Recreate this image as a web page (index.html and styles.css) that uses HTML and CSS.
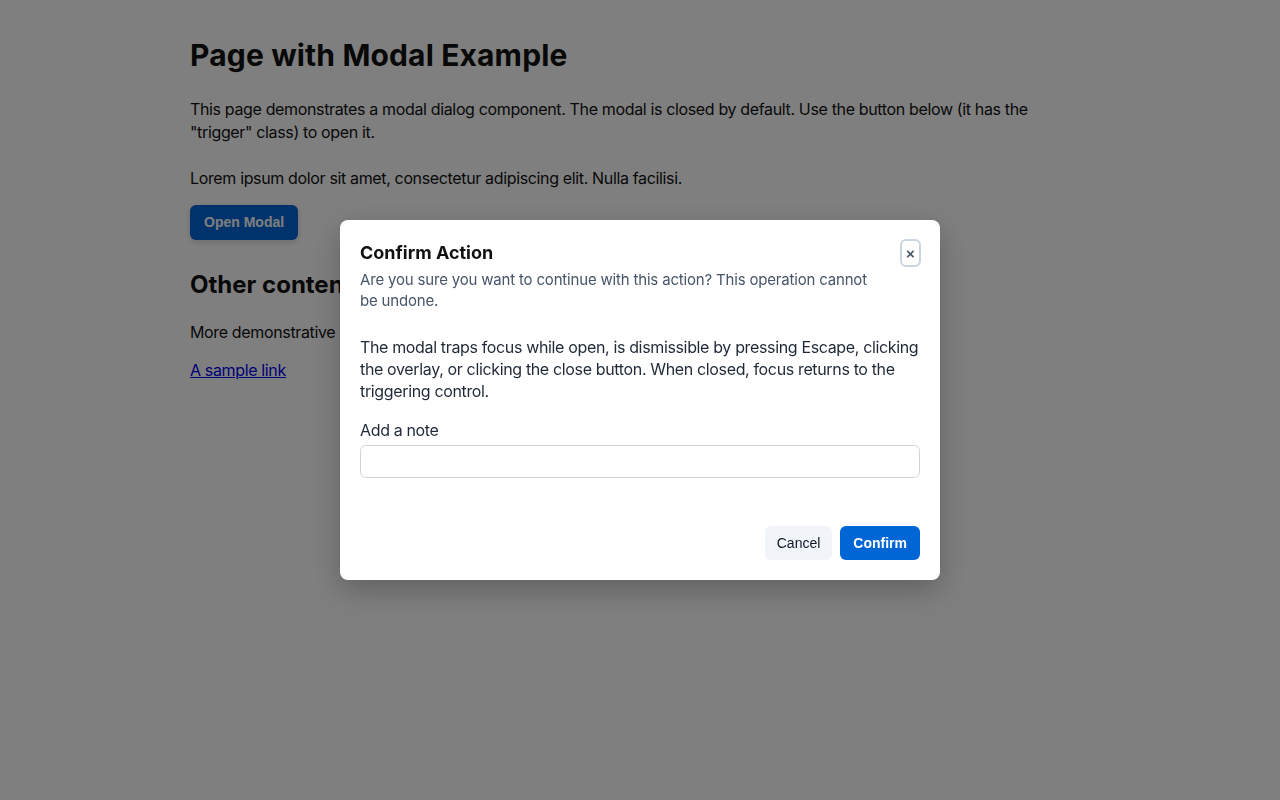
FILE: index.html
```html
<!DOCTYPE html>
<html lang="en">
<head>
    <meta charset="UTF-8">
    <meta name="viewport" content="width=device-width, initial-scale=1.0">
    <title>Page with Modal Example</title>
    <link rel="stylesheet" href="styles.css">
</head>
<body>
    <main class="page">
        <h1>Page with Modal Example</h1>
        <p>This page demonstrates a modal dialog component. The modal is closed by default. Use the button below (it has the "trigger" class) to open it.</p>
        <p>Lorem ipsum dolor sit amet, consectetur adipiscing elit. Nulla facilisi.</p>
        <button class="trigger" id="open-btn">Open Modal</button>

        <h2>Other content</h2>
        <p>More demonstrative content sits behind the dialog while it is open.</p>
        <p class="link-row"><a href="#">A sample link</a></p>
    </main>

    <div class="overlay" id="overlay">
        <div class="modal" role="dialog" aria-modal="true" aria-labelledby="modal-title" aria-describedby="modal-desc">
            <div class="modal-header">
                <div class="modal-heading">
                    <h3 id="modal-title">Confirm Action</h3>
                    <p id="modal-desc">Are you sure you want to continue with this action? This operation cannot be undone.</p>
                </div>
                <button class="close-btn" id="close-btn" aria-label="Close">&times;</button>
            </div>
            <div class="modal-body">
                <p>The modal traps focus while open, is dismissible by pressing Escape, clicking the overlay, or clicking the close button. When closed, focus returns to the triggering control.</p>
                <label for="note">Add a note</label>
                <input type="text" id="note">
            </div>
            <div class="modal-footer">
                <button class="btn btn-secondary" id="cancel-btn">Cancel</button>
                <button class="btn btn-primary" id="confirm-btn">Confirm</button>
            </div>
        </div>
    </div>
</body>
</html>
```

FILE: styles.css
```css
body {
    font-family: Inter, "Noto Sans", sans-serif;
    background: #fff;
    color: #111;
    margin: 0;
}
.page {
    max-width: 900px;
    margin: 0 auto;
    padding: 37px 0 40px;
}
h1 {
    font-size: 30px;
    line-height: 36px;
    margin: 0 0 25px;
    letter-spacing: 0.005em;
}
.page p {
    font-size: 16px;
    line-height: 23px;
    margin: 0 0 23px;
    letter-spacing: -0.022em;
}
.trigger {
    display: block;
    background: #0066d6;
    color: #fff;
    border: none;
    border-radius: 6px;
    padding: 10px 14px;
    font-size: 14px;
    font-weight: bold;
    line-height: 15px;
    font-family: "Liberation Sans", Arial, sans-serif;
    box-shadow: 0 2px 6px rgba(0, 0, 0, 0.15);
    margin-top: -8px;
}
h2 {
    font-size: 24px;
    line-height: 29px;
    margin: 29.5px 0 22px;
}
.page .link-row {
    margin-top: -8px;
}
a {
    color: #0000ee;
}

.overlay {
    position: fixed;
    inset: 0;
    background: rgba(0, 0, 0, 0.5);
    display: flex;
    align-items: center;
    justify-content: center;
}
.modal {
    background: #fff;
    width: 600px;
    box-sizing: border-box;
    padding: 21px 20px 20px;
    border-radius: 8px;
    box-shadow: 0 10px 30px rgba(0, 0, 0, 0.25);
}
.modal-header {
    display: flex;
    justify-content: space-between;
    align-items: flex-start;
}
.modal-heading {
    max-width: 525px;
}
.modal-heading h3 {
    font-size: 18px;
    line-height: 24px;
    margin: 0 0 4px;
    color: #111;
}
.modal-heading p {
    font-size: 15px;
    line-height: 21px;
    margin: 0;
    color: #475569;
    letter-spacing: -0.012em;
}
.close-btn {
    width: 21px;
    height: 28px;
    padding: 0;
    margin: -2px -1px 0 0;
    background: #fff;
    border: 2px solid #cbd5e1;
    border-radius: 6px;
    color: #475569;
    font-size: 15px;
    font-weight: bold;
    line-height: 1;
    font-family: "Liberation Sans", Arial, sans-serif;
    cursor: pointer;
}
.modal-body {
    padding-top: 25px;
}
.modal-body p {
    font-size: 16px;
    line-height: 22px;
    margin: 0 0 17px;
    color: #1f2937;
    letter-spacing: -0.022em;
}
.modal-body label {
    display: block;
    font-size: 16px;
    line-height: 22px;
    color: #1f2937;
    margin-bottom: 4px;
    letter-spacing: -0.022em;
}
.modal-body input {
    display: block;
    width: 100%;
    box-sizing: border-box;
    height: 33px;
    border: 1px solid #d1d5db;
    border-radius: 6px;
    padding: 6px 10px;
    font: inherit;
}
.modal-footer {
    display: flex;
    justify-content: flex-end;
    gap: 8px;
    margin-top: 48px;
}
.btn {
    border: none;
    border-radius: 6px;
    padding: 8px 12px;
    font-size: 14px;
    line-height: 18px;
    font-family: "Liberation Sans", Arial, sans-serif;
    cursor: pointer;
}
.btn-secondary {
    background: #f1f5f9;
    color: #111827;
}
.btn-primary {
    background: #0066d6;
    color: #fff;
    font-weight: bold;
    padding: 8px 13px;
}
```
